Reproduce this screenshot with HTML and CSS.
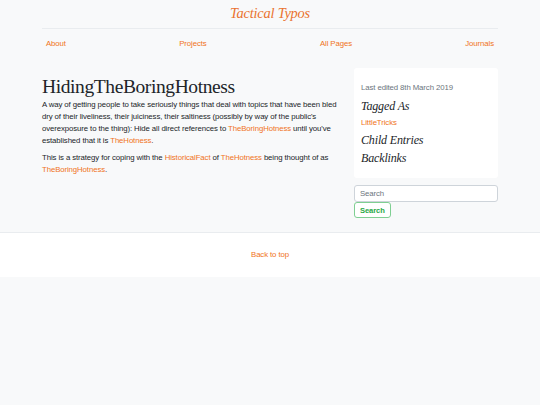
FILE: index.html
```html
<!DOCTYPE html>
<html>
<head>
<meta charset="utf-8">
<link rel="stylesheet" href="styles.css">
</head>
<body>
<div class="page">
  <header class="container header">
    <div class="brand"><a href="#">Tactical Typos</a></div>
    <nav class="nav">
      <a href="#">About</a>
      <a href="#">Projects</a>
      <a href="#">All Pages</a>
      <a href="#">Journals</a>
    </nav>
  </header>
  <main class="container main">
    <article class="content">
      <h1 class="title">HidingTheBoringHotness</h1>
      <p>A way of getting people to take seriously things that deal with topics that have been bled dry of their liveliness, their juiciness, their saltiness (possibly by way of the public's overexposure to the thing): Hide all direct references to <a href="#">TheBoringHotness</a> until you've established that it is <a href="#">TheHotness</a>.</p>
      <p>This is a strategy for coping with the <a href="#">HistoricalFact</a> of <a href="#">TheHotness</a> being thought of as <a href="#">TheBoringHotness</a>.</p>
    </article>
    <aside class="sidebar">
      <div class="box">
        <p class="edited">Last edited 8th March 2019</p>
        <h4>Tagged As</h4>
        <a class="tag" href="#">LittleTricks</a>
        <h4>Child Entries</h4>
        <h4>Backlinks</h4>
      </div>
      <form class="search">
        <input class="search-input" type="text" placeholder="Search">
        <button class="search-btn" type="button">Search</button>
      </form>
    </aside>
  </main>
</div>
<footer class="footer">
  <a href="#">Back to top</a>
</footer>
</body>
</html>
```

FILE: styles.css
```css
html, body {
  margin: 0;
  padding: 0;
  background: #f8f9fa;
  font-family: "Liberation Sans", Arial, sans-serif;
  font-size: 7.8px;
  letter-spacing: -0.1px;
  color: #212529;
}
a { color: #f07323; text-decoration: none; }
.container {
  width: 456px;
  margin: 0 auto;
}
.header {
  padding-top: 5px;
}
.brand {
  text-align: center;
  font-family: "Liberation Serif", Georgia, serif;
  font-style: italic;
  font-size: 14.4px;
  letter-spacing: -0.2px;
  line-height: 17px;
  padding-bottom: 6px;
  border-bottom: 1px solid #e9ecef;
}
.brand a { color: #ea7330; }
.nav {
  display: flex;
  justify-content: space-between;
  padding: 9px 4px 0;
  line-height: 12px;
}
.main {
  display: flex;
  justify-content: space-between;
  padding-top: 18px;
  padding-bottom: 14px;
}
.content {
  width: 298px;
  padding-top: 8px;
}
.title {
  font-family: "Liberation Serif", Georgia, serif;
  font-weight: normal;
  font-size: 19.5px;
  letter-spacing: -0.4px;
  line-height: 22px;
  margin: 0 0 1px;
  color: #212529;
}
.content p {
  margin: 0 0 5px;
  line-height: 12px;
}
.sidebar {
  width: 144px;
}
.box {
  background: #fff;
  border-radius: 3px;
  padding: 14px 7px 9px;
}
.edited {
  margin: 0 0 5px;
  color: #6c757d;
  line-height: 12px;
}
.box h4 {
  font-family: "Liberation Serif", Georgia, serif;
  font-style: italic;
  font-weight: normal;
  font-size: 12px;
  letter-spacing: -0.15px;
  line-height: 14px;
  margin: 0 0 4px;
}
.tag {
  display: block;
  line-height: 12px;
  margin-bottom: 4px;
}
.search {
  margin-top: 7px;
}
.search-input {
  display: block;
  box-sizing: border-box;
  width: 144px;
  height: 17px;
  border: 1px solid #ced4da;
  border-radius: 3px;
  padding: 0 5px;
  font-family: inherit;
  font-size: 7.8px;
  letter-spacing: -0.1px;
  background: #fff;
  margin: 0;
}
.search-input::placeholder { color: #6c757d; }
.search-btn {
  display: block;
  box-sizing: border-box;
  height: 16px;
  padding: 0 5px;
  border: 1px solid #7fcf92;
  border-radius: 3px;
  background: #fff;
  color: #28a745;
  font-family: inherit;
  font-weight: bold;
  font-size: 7.6px;
  letter-spacing: -0.1px;
  margin-top: 0;
}
.footer {
  background: #fff;
  border-top: 1px solid #e9ecef;
  height: 44px;
  display: flex;
  align-items: center;
  justify-content: center;
  line-height: 12px;
}
```
